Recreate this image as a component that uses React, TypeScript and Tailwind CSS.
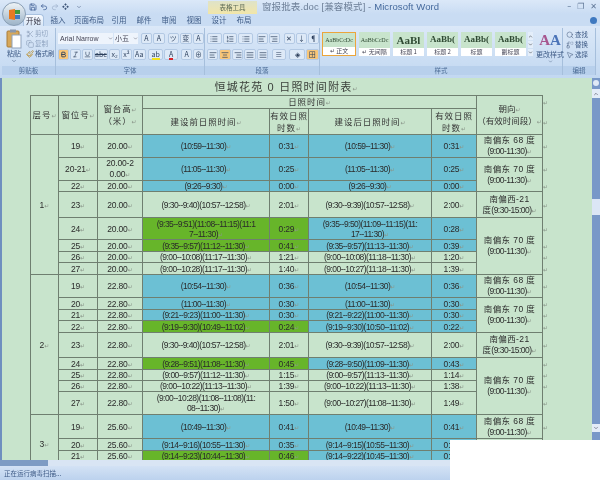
import React from "react";
import { Bold, Italic, Underline, AlignLeft, AlignCenter, AlignRight, AlignJustify, List, ListOrdered, Search, MousePointer2, Replace, Scissors, Copy, Paintbrush, Undo2, Save, ChevronDown, ChevronUp } from "lucide-react";

type Fill = "" | "b" | "g";
type R = { h: number; no: string; ht: string; t1: string; v1: string; f1: Fill; t2: string; v2: string; f2: Fill; floor?: [string, number]; dir?: [React.ReactNode, number] };

const Mark = () => <span className="text-[6px] leading-[6px] tracking-normal text-[#8a968a] font-['DejaVu_Sans']">↵</span>;
const fill = (f: Fill) => (f === "b" ? "bg-[#6cc0d4]" : f === "g" ? "bg-[#67b52a]" : "");

const Cn = ({ children }: { children: React.ReactNode }) => <span className="tracking-[0.4px] text-[8.5px]">{children}</span>;
const d68 = <><Cn>南偏东 68 度</Cn><br />(9:00-11:30)</>;
const d70 = <><Cn>南偏东 70 度</Cn><br />(9:00-11:30)</>;
const d21 = <><Cn>南偏西-21</Cn><br /><Cn>度</Cn>(9:30-15:00)</>;

const rows: R[] = [
  { h: 23, no: "19", ht: "20.00", t1: "(10:59--11:30)", v1: "0:31", f1: "b", t2: "(10:59--11:30)", v2: "0:31", f2: "b", floor: ["1", 8], dir: [d68, 1] },
  { h: 23, no: "20-21", ht: "20.00-2\n0.00", t1: "(11:05--11:30)", v1: "0:25", f1: "b", t2: "(11:05--11:30)", v2: "0:25", f2: "b", dir: [d70, 2] },
  { h: 11, no: "22", ht: "20.00", t1: "(9:26--9:30)", v1: "0:00", f1: "b", t2: "(9:26--9:30)", v2: "0:00", f2: "b" },
  { h: 26, no: "23", ht: "20.00", t1: "(9:30--9:40)(10:57--12:58)", v1: "2:01", f1: "", t2: "(9:30--9:39)(10:57--12:58)", v2: "2:00", f2: "", dir: [d21, 1] },
  { h: 22, no: "24", ht: "20.00", t1: "(9:35--9:51)(11:08--11:15)(11:1\n7--11:30)", v1: "0:29", f1: "g", t2: "(9:35--9:50)(11:09--11:15)(11:\n17--11:30)", v2: "0:28", f2: "b", dir: [d70, 4] },
  { h: 12, no: "25", ht: "20.00", t1: "(9:35--9:57)(11:12--11:30)", v1: "0:41", f1: "g", t2: "(9:35--9:57)(11:13--11:30)", v2: "0:39", f2: "b" },
  { h: 11, no: "26", ht: "20.00", t1: "(9:00--10:08)(11:17--11:30)", v1: "1:21", f1: "", t2: "(9:00--10:08)(11:18--11:30)", v2: "1:20", f2: "" },
  { h: 12, no: "27", ht: "20.00", t1: "(9:00--10:28)(11:17--11:30)", v1: "1:40", f1: "", t2: "(9:00--10:27)(11:18--11:30)", v2: "1:39", f2: "" },
  { h: 23, no: "19", ht: "22.80", t1: "(10:54--11:30)", v1: "0:36", f1: "b", t2: "(10:54--11:30)", v2: "0:36", f2: "b", floor: ["2", 9], dir: [d68, 1] },
  { h: 12, no: "20", ht: "22.80", t1: "(11:00--11:30)", v1: "0:30", f1: "b", t2: "(11:00--11:30)", v2: "0:30", f2: "b", dir: [d70, 3] },
  { h: 11, no: "21", ht: "22.80", t1: "(9:21--9:23)(11:00--11:30)", v1: "0:30", f1: "b", t2: "(9:21--9:22)(11:00--11:30)", v2: "0:30", f2: "b" },
  { h: 12, no: "22", ht: "22.80", t1: "(9:19--9:30)(10:49--11:02)", v1: "0:24", f1: "g", t2: "(9:19--9:30)(10:50--11:02)", v2: "0:22", f2: "b" },
  { h: 25, no: "23", ht: "22.80", t1: "(9:30--9:40)(10:57--12:58)", v1: "2:01", f1: "", t2: "(9:30--9:39)(10:57--12:58)", v2: "2:00", f2: "", dir: [d21, 1] },
  { h: 12, no: "24", ht: "22.80", t1: "(9:28--9:51)(11:08--11:30)", v1: "0:45", f1: "g", t2: "(9:28--9:50)(11:09--11:30)", v2: "0:43", f2: "b", dir: [d70, 4] },
  { h: 11, no: "25", ht: "22.80", t1: "(9:00--9:57)(11:12--11:30)", v1: "1:15", f1: "", t2: "(9:00--9:57)(11:13--11:30)", v2: "1:14", f2: "" },
  { h: 11, no: "26", ht: "22.80", t1: "(9:00--10:22)(11:13--11:30)", v1: "1:39", f1: "", t2: "(9:00--10:22)(11:13--11:30)", v2: "1:38", f2: "" },
  { h: 23, no: "27", ht: "22.80", t1: "(9:00--10:28)(11:08--11:08)(11:\n08--11:30)", v1: "1:50", f1: "", t2: "(9:00--10:27)(11:08--11:30)", v2: "1:49", f2: "" },
  { h: 24, no: "19", ht: "25.60", t1: "(10:49--11:30)", v1: "0:41", f1: "b", t2: "(10:49--11:30)", v2: "0:41", f2: "b", floor: ["3", 4], dir: [d68, 1] },
  { h: 12, no: "20", ht: "25.60", t1: "(9:14--9:16)(10:55--11:30)", v1: "0:35", f1: "b", t2: "(9:14--9:15)(10:55--11:30)", v2: "0:35", f2: "b", dir: [d70, 3] },
  { h: 11, no: "21", ht: "25.60", t1: "(9:14--9:23)(10:44--11:30)", v1: "0:46", f1: "g", t2: "(9:14--9:22)(10:45--11:30)", v2: "0:45", f2: "b" },
  { h: 12, no: "", ht: "", t1: "", v1: "", f1: "", t2: "", v2: "", f2: "" },
];

const cell = "border border-[#6f7f70] p-0 text-center align-middle leading-[10px] whitespace-pre-line overflow-hidden";
const head = `${cell} font-normal tracking-[0.9px] text-[8.5px] leading-[12px]`;
const tall = "leading-[10.5px]";
const time = "text-[8.5px] tracking-[-0.55px]";
const num = "text-[8.5px] tracking-[-0.2px]";

function Table() {
  return (
    <table className="table-fixed border-collapse w-[535px] text-[8.5px] text-[#2b2b2b] font-['Liberation_Sans','Noto_Sans_CJK_SC',sans-serif]">
      <colgroup>
        <col className="w-[28px]" /><col className="w-[39px]" /><col className="w-[45px]" /><col className="w-[127px]" />
        <col className="w-[39px]" /><col className="w-[123px]" /><col className="w-[45px]" /><col className="w-[66px]" /><col className="w-[23px]" />
      </colgroup>
      <thead className="text-[#333]">
        <tr className="h-[13px]">
          <th rowSpan={2} className={head}>层号<Mark /></th>
          <th rowSpan={2} className={head}>窗位号<Mark /></th>
          <th rowSpan={2} className={head}>窗台高<Mark /><br />（米）<Mark /></th>
          <th colSpan={4} className={head}>日照时间<Mark /></th>
          <th rowSpan={2} className={`${head} tracking-[0px]`}>朝向<Mark /><br />（有效时间段）<Mark /></th>
          <th className="p-0 text-left font-normal leading-[8px]"><Mark /></th>
        </tr>
        <tr className="h-[26px]">
          <th className={head}>建设前日照时间<Mark /></th>
          <th className={`${head} tracking-[0.3px]`}>有效日照<br />时数<Mark /></th>
          <th className={head}>建设后日照时间<Mark /></th>
          <th className={`${head} tracking-[0.5px]`}>有效日照<br />时数<Mark /></th>
          <th className="p-0 text-left font-normal leading-[8px]"><Mark /></th>
        </tr>
      </thead>
      <tbody>
        {rows.map((r, i) => (
          <tr key={i} style={{ height: r.h }}>
            {r.floor && <td rowSpan={r.floor[1]} className={cell}>{r.floor[0]}<Mark /></td>}
            <td className={`${cell} ${num}`}>{r.no}{r.no && <Mark />}</td>
            <td className={`${cell} ${num} ${r.ht.includes("\n") ? "leading-[11px]" : ""}`}>{r.ht}{r.ht && <Mark />}</td>
            <td className={`${cell} ${time} ${fill(r.f1)} ${r.t1.includes("\n") ? tall : ""}`}>{r.t1}{r.t1 && <Mark />}</td>
            <td className={`${cell} ${num} ${fill(r.f1)}`}>{r.v1}{r.v1 && <Mark />}</td>
            <td className={`${cell} ${time} ${fill(r.f2)} ${r.t2.includes("\n") ? tall : ""}`}>{r.t2}{r.t2 && <Mark />}</td>
            <td className={`${cell} ${num} ${fill(r.f2)}`}>{r.v2}{r.v2 && <Mark />}</td>
            {r.dir && <td rowSpan={r.dir[1]} className={`${cell} leading-[11px] tracking-[-0.5px]`}>{r.dir[0]}<Mark /></td>}
            <td className="p-0 text-left leading-[8px]"><Mark /></td>
          </tr>
        ))}
      </tbody>
    </table>
  );
}

const Tab = ({ label, w, active }: { label: string; w: string; active?: boolean }) => (
  <div className={`${w} h-full flex items-center justify-center text-[7.5px] text-[#3d5a85] ${active ? "bg-gradient-to-b from-[#f8fbff] to-[#d7e6f7] border border-b-0 border-[#a9c2e0] rounded-t-sm text-[#334]" : ""}`}>{label}</div>
);

const Btn = ({ children, hot, w = "w-[12px]" }: { children: React.ReactNode; hot?: boolean; w?: string }) => (
  <div className={`${w} h-[11px] flex items-center justify-center text-[7px] text-[#2c3f5c] border border-[#b3c9e4] rounded-[2px] ${hot ? "bg-[#f8c678]" : "bg-[#dde9f7]"}`}>{children}</div>
);

const Group = ({ w, label, children }: { w: string; label: string; children: React.ReactNode }) => (
  <div className={`${w} h-full flex flex-col border-r border-[#a6bfdc] shrink-0`}>
    <div className="flex-1 min-h-0">{children}</div>
    <div className="h-[9px] bg-[#b8d0ec] text-[6.5px] text-[#4a6a94] flex items-center justify-center">{label}</div>
  </div>
);

const Style = ({ sample, label, w = "w-[31px]", big, selected }: { sample: string; label: string; w?: string; big?: string; selected?: boolean }) => (
  <div className={`${w} h-[24px] flex flex-col overflow-hidden shrink-0 ${selected ? "border border-[#eba53c]" : ""}`}>
    <div className={`flex-1 bg-[#c8e4cc] flex items-center justify-center whitespace-nowrap overflow-hidden text-[#2f4a33] font-['Liberation_Serif',serif] ${big ?? "text-[6px]"}`}>{sample}</div>
    <div className="h-[8px] bg-white text-[6px] leading-[8px] text-center text-[#445]">{label}</div>
  </div>
);

const ic = { size: 8, strokeWidth: 1.5, color: "#3e5578" };

function Ribbon() {
  return (
    <div className="h-[52px] flex px-[2px] pt-[2px] pb-[3px] bg-gradient-to-b from-[#dbe8f8] to-[#c2d8f1] font-['Noto_Sans_CJK_SC',sans-serif]">
      <Group w="w-[54px]" label="剪贴板">
        <div className="flex h-full">
          <div className="w-[24px] flex flex-col items-center pt-[1px]">
            <svg width="16" height="20" viewBox="0 0 16 20">
              <rect x="1" y="2" width="12" height="16" rx="1" fill="#d7a85a" stroke="#a97d3a" />
              <rect x="4" y="0.5" width="6" height="3" fill="#8a98ac" />
              <rect x="6" y="6" width="9" height="13" fill="#fff" stroke="#8fa3bd" />
            </svg>
            <span className="text-[7px] leading-[9px] text-[#3d5a85]">粘贴</span>
            <ChevronDown size={6} color="#3e5578" />
          </div>
          <div className="flex flex-col gap-[1px] pt-[1px] text-[6.5px] leading-[9px] text-[#5d7699] whitespace-nowrap">
            <div className="flex items-center gap-[1px] opacity-60"><Scissors {...ic} />剪切</div>
            <div className="flex items-center gap-[1px] opacity-60"><Copy {...ic} />复制</div>
            <div className="flex items-center gap-[1px] text-[#3d5a85]"><Paintbrush size={8} color="#b98a1f" />格式刷</div>
          </div>
        </div>
      </Group>
      <Group w="w-[149px]" label="字体">
        <div className="flex flex-col gap-[5px] pl-[2px] pt-[5px]">
          <div className="flex items-center gap-[1px]">
            <div className="w-[58px] h-[11px] bg-[#eef4fc] text-[7px] leading-[11px] pl-[2px] text-[#445] font-['Liberation_Sans'] flex justify-between items-center">Arial Narrow<ChevronDown size={5} /></div>
            <div className="w-[25px] h-[11px] bg-[#eef4fc] text-[7px] leading-[11px] pl-[1px] text-[#445] flex justify-between items-center">小五<ChevronDown size={5} /></div>
            <div className="w-[1px]" />
            <Btn>A</Btn><Btn>A</Btn><div className="w-[1px]" />
            <Btn>ツ</Btn><Btn>变</Btn><Btn>A</Btn>
          </div>
          <div className="flex items-center gap-[1px]">
            <Btn hot><Bold size={7} strokeWidth={3} /></Btn>
            <Btn><Italic size={7} /></Btn>
            <Btn><Underline size={7} /></Btn>
            <Btn w="w-[16px]"><span className="line-through">abc</span></Btn>
            <Btn>x₂</Btn><Btn>x²</Btn><Btn w="w-[14px]">Aa</Btn>
            <div className="w-[1px]" />
            <Btn w="w-[16px]"><span className="border-b-2 border-[#f2e21a] leading-[8px]">ab</span></Btn>
            <Btn w="w-[16px]"><span className="border-b-2 border-[#d8242a] leading-[8px]">A</span></Btn>
            <div className="w-[1px]" />
            <Btn>A</Btn><Btn>⊕</Btn>
          </div>
        </div>
      </Group>
      <Group w="w-[115px]" label="段落">
        <div className="flex flex-col gap-[5px] pl-[2px] pt-[5px]">
          <div className="flex gap-[1px]">
            <Btn w="w-[16px]"><List size={8} /></Btn><Btn w="w-[16px]"><ListOrdered size={8} /></Btn><Btn w="w-[16px]"><List size={8} /></Btn>
            <div className="w-[2px]" />
            <Btn><AlignLeft size={8} /></Btn><Btn><AlignRight size={8} /></Btn><div className="w-[2px]" />
            <Btn>✕</Btn><Btn>↓</Btn><Btn>¶</Btn>
          </div>
          <div className="flex gap-[1px]">
            <Btn><AlignLeft size={8} /></Btn><Btn hot><AlignCenter size={8} /></Btn><Btn><AlignRight size={8} /></Btn><Btn><AlignJustify size={8} /></Btn><Btn><AlignJustify size={8} /></Btn>
            <div className="w-[2px]" />
            <Btn w="w-[14px]">≡</Btn><div className="w-[2px]" />
            <Btn w="w-[16px]">◈</Btn><Btn w="w-[14px]" hot>田</Btn>
          </div>
        </div>
      </Group>
      <Group w="w-[243px]" label="样式">
        <div className="flex h-full pl-[2px] pt-[4px] gap-[3px]">
          <Style selected w="w-[34px]" sample="AaBbCcDc" label="↵ 正文" />
          <Style sample="AaBbCcDc" label="↵ 无间隔" />
          <Style sample="AaBl" big="text-[11px] font-bold" label="标题 1" />
          <Style sample="AaBb(" big="text-[9px] font-bold" label="标题 2" />
          <Style sample="AaBb(" big="text-[9px] font-bold" label="标题" />
          <Style sample="AaBb(" big="text-[9px] font-bold" label="副标题" />
          <div className="w-[7px] h-[24px] flex flex-col gap-[1px] -ml-[1px]">
            <div className="h-[8px] bg-[#e4eefa] flex items-center justify-center"><ChevronUp size={5} /></div>
            <div className="h-[7px] bg-[#e4eefa] flex items-center justify-center"><ChevronDown size={5} /></div>
            <div className="h-[7px] bg-[#e4eefa] flex items-center justify-center"><ChevronDown size={5} /></div>
          </div>
          <div className="flex-1 flex flex-col items-center">
            <div className="text-[15px] leading-[16px] font-bold text-[#4b74b8] font-['Liberation_Serif']"><span className="text-[#a7568f]">A</span>A</div>
            <span className="text-[7px] leading-[9px] mt-[2px] text-[#3d5a85] whitespace-nowrap">更改样式</span>
            <ChevronDown size={5} color="#3e5578" />
          </div>
        </div>
      </Group>
      <Group w="w-[33px]" label="编辑">
        <div className="flex flex-col gap-[1px] pl-[3px] pt-[2px] text-[6.5px] leading-[9px] text-[#3d5a85]">
          <div className="flex items-center gap-[1px]"><Search {...ic} />查找</div>
          <div className="flex items-center gap-[1px]"><Replace {...ic} />替换</div>
          <div className="flex items-center gap-[1px]"><MousePointer2 {...ic} />选择</div>
        </div>
      </Group>
    </div>
  );
}

export default function App() {
  return (
    <div className="relative w-[600px] h-[480px] overflow-hidden flex flex-col bg-[#c8dbf2] blur-[0.3px] font-['Liberation_Sans','Noto_Sans_CJK_SC',sans-serif]">
      {/* title bar */}
      <div className="h-[14px] flex items-center bg-gradient-to-b from-[#dbe8f8] to-[#c9dcf3] shrink-0">
        <div className="w-[27px]" />
        <div className="flex items-center gap-[3px] pl-[2px] w-[181px]">
          <Save size={8} color="#2d4f8a" />
          <Undo2 size={8} color="#2d4f8a" />
          <Undo2 size={8} color="#9aaec8" className="-scale-x-100" />
          <span className="text-[7px] text-[#3e5578]">❖</span>
          <ChevronDown size={6} color="#3e5578" className="ml-[4px]" />
        </div>
        <div className="w-[49px] h-full mt-[2px] bg-gradient-to-b from-[#dfe3c8] to-[#f3e6a6] text-[6.5px] text-[#5d6b55] flex items-center justify-center font-['Noto_Sans_CJK_SC']">表格工具</div>
        <div className="pl-[5px] text-[9.5px] tracking-[0.1px] text-[#6d7f97] whitespace-nowrap flex-1">窗报批表.doc [兼容模式] - <span className="text-[#44699c]">Microsoft Word</span></div>
        <div className="flex gap-[6px] pr-[3px] text-[8px] text-[#5f7696] font-['DejaVu_Sans']"><span>–</span><span>❐</span><span>✕</span></div>
      </div>
      {/* tabs */}
      <div className="h-[12px] flex items-end pl-[23px] bg-[#c9dcf3] shrink-0 font-['Noto_Sans_CJK_SC',sans-serif]">
        <Tab label="开始" w="w-[21px]" active />
        <Tab label="插入" w="w-[28px]" />
        <Tab label="页面布局" w="w-[34px]" />
        <Tab label="引用" w="w-[26px]" />
        <Tab label="邮件" w="w-[24px]" />
        <Tab label="审阅" w="w-[26px]" />
        <Tab label="视图" w="w-[24px]" />
        <Tab label="设计" w="w-[26px]" />
        <Tab label="布局" w="w-[24px]" />
        <div className="flex-1" />
        <div className="w-[7px] h-[7px] rounded-full bg-[#3f79c0] mr-[3px] mb-[2px]" />
      </div>
      <Ribbon />
      {/* document */}
      <div className="flex h-[382px] shrink-0 overflow-hidden">
        <div className="w-[2px] bg-[#6f8fbf] shrink-0" />
        <div className="flex-1 bg-[#c8e4cc] overflow-hidden pl-[28px] pt-[1px] min-w-0">
          <div className="w-[512px] h-[16px] text-center text-[11px] leading-[16px] tracking-[1.2px] text-[#3a3f3a] whitespace-nowrap">恒城花苑 0 日照时间附表<Mark /></div>
          <Table />
        </div>
        <div className="w-[8px] shrink-0 bg-[#7898c8] flex flex-col items-center pt-[2px] gap-[3px]">
          <div className="w-[6px] h-[6px] bg-[#dfe9f6] rounded-sm" />
          <div className="w-[8px] h-[9px] bg-[#e3ecf8] flex items-center justify-center"><ChevronUp size={6} color="#334" /></div>
          <div className="w-[8px] h-[16px] mt-[98px] bg-[#dbe6f5]" />
          <div className="w-[8px] h-[8px] mt-[206px] bg-[#e3ecf8] flex items-center justify-center"><ChevronDown size={6} color="#334" /></div>
        </div>
      </div>
      {/* horizontal scrollbar */}
      <div className="h-[6px] flex shrink-0">
        <div className="w-[48px] bg-[#7e9cc4]" />
        <div className="flex-1 bg-[#d9e5f4]" />
      </div>
      {/* status */}
      <div className="flex-1 bg-gradient-to-b from-[#d3e2f5] to-[#bcd2ee] pl-[4px] text-[6.5px] leading-[14px] text-[#3d5a85] font-['Noto_Sans_CJK_SC',sans-serif]">正在运行病毒扫描...</div>
      {/* white notch over the window corner */}
      <div className="absolute left-[450px] top-[440px] w-[150px] h-[40px] bg-white" />
      {/* office orb */}
      <div className="absolute left-[2px] top-[2px] w-[24px] h-[24px] rounded-full bg-gradient-to-b from-[#eef3f6] to-[#9db4c8] border border-[#8a9fb5] flex items-center justify-center">
        <svg width="13" height="13" viewBox="0 0 13 13">
          <path d="M1 2 L7 1 V12 L1 11Z" fill="#e67a22" />
          <rect x="7" y="2" width="5" height="4" fill="#3f9a3b" />
          <rect x="7" y="7" width="5" height="4" fill="#3f79c0" />
        </svg>
      </div>
    </div>
  );
}
